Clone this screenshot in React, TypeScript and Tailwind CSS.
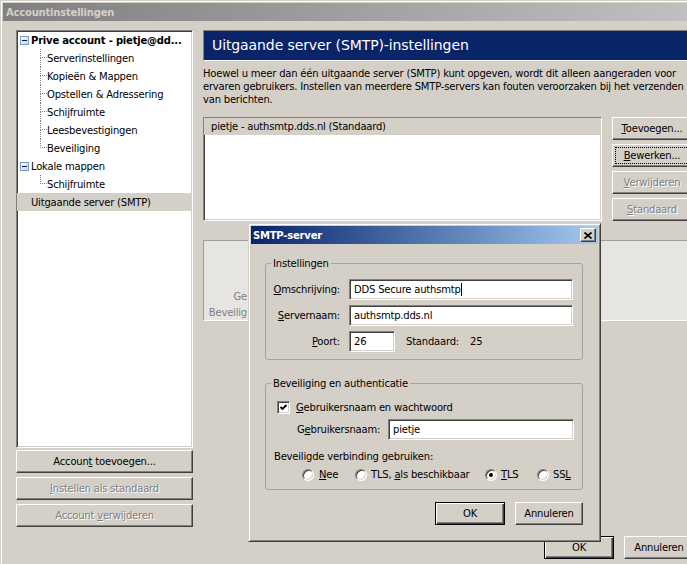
import type { ReactNode } from "react";

const bevel =
  "bg-[#d4d0c8] border border-t-white border-l-white border-r-[#404040] border-b-[#404040] shadow-[inset_-1px_-1px_0_#808080]";
const defaultBevel =
  "bg-[#d4d0c8] border border-black shadow-[inset_1px_1px_0_#fff,inset_-1px_-1px_0_#404040,inset_-2px_-2px_0_#808080]";
const sunken =
  "border border-t-[#808080] border-l-[#808080] border-r-white border-b-white shadow-[inset_1px_1px_0_#404040,inset_-1px_-1px_0_#d4d0c8]";
const disabledText = "text-[#808080] [text-shadow:1px_1px_0_#fff]";

const U = ({ children }: { children: ReactNode }) => (
  <span className="underline underline-offset-[1px]">{children}</span>
);

const Button = ({
  children,
  className = "",
  disabled = false,
  isDefault = false,
}: {
  children: ReactNode;
  className?: string;
  disabled?: boolean;
  isDefault?: boolean;
}) => (
  <div
    className={`flex h-[23px] items-center justify-center ${
      isDefault ? defaultBevel : bevel
    } ${disabled ? disabledText : ""} ${className}`}
  >
    <span>{children}</span>
  </div>
);

const MinusBox = () => (
  <svg width="9" height="9" viewBox="0 0 9 9" className="shrink-0">
    <defs>
      <linearGradient id="mb" x1="0" y1="0" x2="1" y2="1">
        <stop offset="0" stopColor="#ffffff" />
        <stop offset="1" stopColor="#c8d0dc" />
      </linearGradient>
    </defs>
    <rect x="0.5" y="0.5" width="8" height="8" fill="url(#mb)" stroke="#7f9db9" />
    <path d="M2 4.5h5" stroke="#00156e" />
  </svg>
);

const TreeChild = ({ label, last = false }: { label: string; last?: boolean }) => (
  <div className="flex h-[18px]">
    <div className="w-[23px]" />
    <div className="flex w-[7px] flex-col">
      <div className="h-[9px] border-b border-l border-dotted border-[#808080]" />
      <div className={last ? "h-[9px]" : "h-[9px] border-l border-dotted border-[#808080]"} />
    </div>
    <span className="flex items-center">{label}</span>
  </div>
);

const Radio = ({ checked = false }: { checked?: boolean }) => (
  <div
    className={`flex h-[12px] w-[12px] shrink-0 items-center justify-center rounded-full bg-white ${sunken}`}
  >
    {checked && <div className="h-[4px] w-[4px] rounded-full bg-black" />}
  </div>
);

const Field = ({ children, className = "" }: { children: ReactNode; className?: string }) => (
  <div className={`flex h-[21px] items-center bg-white pl-[4px] ${sunken} ${className}`}>
    {children}
  </div>
);

const SmtpDialog = () => (
  <div className="absolute left-[248px] top-[223px] flex h-[319px] w-[353px] flex-col border border-t-[#d4d0c8] border-l-[#d4d0c8] border-r-[#404040] border-b-[#404040] bg-[#d4d0c8] p-[2px] shadow-[inset_1px_1px_0_#fff,inset_-1px_-1px_0_#808080]">
    <div className="flex h-[18px] items-center justify-between bg-linear-to-r from-[#0a246a] to-[#a6caf0] pl-[2px]">
      <span className="font-bold text-white">SMTP-server</span>
      <div className={`mr-[2px] flex h-[14px] w-[16px] items-center justify-center ${bevel}`}>
        <svg width="8" height="7" viewBox="0 0 8 7">
          <path d="M0.5 0.5L7.5 6.5M7.5 0.5L0.5 6.5" stroke="#000" strokeWidth="1.7" />
        </svg>
      </div>
    </div>

    <div className="flex flex-col pl-[14px] pr-[15px]">
      <fieldset className="mt-[13px] rounded-[3px] border border-[#a5a39c] pb-[7px]">
        <legend className="ml-[5px] px-[2px]">Instellingen</legend>
        <div className="mt-[9px] flex flex-col gap-[5px]">
          <div className="flex items-center">
            <span className="w-[74px] text-right">
              <U>O</U>mschrijving:
            </span>
            <Field className="ml-[9px] w-[224px]">
              DDS Secure authsmtp<span className="h-[13px] w-px bg-black" />
            </Field>
          </div>
          <div className="flex items-center">
            <span className="w-[74px] text-right">
              <U>S</U>ervernaam:
            </span>
            <Field className="ml-[9px] w-[224px]">authsmtp.dds.nl</Field>
          </div>
          <div className="flex items-center">
            <span className="w-[74px] text-right">
              <U>P</U>oort:
            </span>
            <Field className="ml-[9px] w-[46px]">26</Field>
            <span className="ml-[11px] w-[64px]">Standaard:</span>
            <span>25</span>
          </div>
        </div>
      </fieldset>

      <fieldset className="mt-[17px] rounded-[3px] border border-[#a5a39c] pb-[8px]">
        <legend className="ml-[5px] px-[2px]">Beveiliging en authenticatie</legend>
        <div className="ml-[11px] mt-[11px] flex h-[13px] items-center gap-[6px]">
          <div className={`flex h-[13px] w-[13px] items-center justify-center bg-white ${sunken}`}>
            <svg width="9" height="9" viewBox="0 0 9 9">
              <path d="M1.5 4L3.5 6L7.5 2" stroke="#000" strokeWidth="1.8" fill="none" />
            </svg>
          </div>
          <span>
            <U>G</U>ebruikersnaam en wachtwoord
          </span>
        </div>
        <div className="ml-[31px] mt-[5px] flex items-center">
          <span className="w-[91px]">
            G<U>e</U>bruikersnaam:
          </span>
          <Field className="w-[186px]">pietje</Field>
        </div>
        <div className="ml-[8px] mt-[10px]">Beveiligde verbinding gebruiken:</div>
        <div className="ml-[36px] mt-[5px] flex h-[13px] items-center">
          <div className="flex w-[53px] items-center gap-[5px]">
            <Radio />
            <span>
              <U>N</U>ee
            </span>
          </div>
          <div className="flex w-[130px] items-center gap-[4px]">
            <Radio />
            <span>
              TLS, <U>a</U>ls beschikbaar
            </span>
          </div>
          <div className="flex w-[52px] items-center gap-[4px]">
            <Radio checked />
            <span>
              <U>T</U>LS
            </span>
          </div>
          <div className="flex items-center gap-[4px]">
            <Radio />
            <span>
              SS<U>L</U>
            </span>
          </div>
        </div>
      </fieldset>

      <div className="mt-[12px] flex justify-end gap-[10px]">
        <Button isDefault className="w-[70px]">
          OK
        </Button>
        <Button className="w-[68px]">Annuleren</Button>
      </div>
    </div>
  </div>
);

export default function App() {
  return (
    <div className="relative h-[564px] w-[687px] overflow-hidden bg-[#d4d0c8] font-['DejaVu_Sans',sans-serif] text-[10px] leading-[13px] tracking-[-0.2px] text-black">
      <div className="h-full border-l border-t border-[#d4d0c8]">
        <div className="h-full border-l border-t border-white pl-px pt-px">
          {/* title bar */}
          <div className="flex h-[18px] items-center bg-linear-to-r from-[#808080] to-[#c0c0c0] pl-[3px] font-bold text-[#d4d0c8]">
            Accountinstellingen
          </div>

          <div className="flex pt-[9px]">
            {/* left column */}
            <div className="ml-[13px] flex w-[178px] flex-col">
              <div className={`h-[418px] bg-white ${sunken}`}>
                <div className="flex h-[18px] items-center gap-[2px] pl-[3px]">
                  <MinusBox />
                  <span className="font-bold">Prive account - pietje@dd...</span>
                </div>
                <TreeChild label="Serverinstellingen" />
                <TreeChild label="Kopieën & Mappen" />
                <TreeChild label="Opstellen & Adressering" />
                <TreeChild label="Schijfruimte" />
                <TreeChild label="Leesbevestigingen" />
                <TreeChild label="Beveiliging" last />
                <div className="flex h-[18px] items-center gap-[2px] pl-[3px]">
                  <MinusBox />
                  <span>Lokale mappen</span>
                </div>
                <TreeChild label="Schijfruimte" last />
                <div className="flex h-[18px] items-center bg-[#d4d0c8] pl-[14px]">
                  Uitgaande server (SMTP)
                </div>
              </div>
              <Button className="mt-[2px] w-[177px]">
                Accoun<U>t</U> toevoegen...
              </Button>
              <Button disabled className="mt-[4px] w-[177px]">
                <U>I</U>nstellen als standaard
              </Button>
              <Button disabled className="mt-[4px] w-[177px]">
                Account <U>v</U>erwijderen
              </Button>
            </div>

            {/* right column */}
            <div className="ml-[10px] flex h-[529px] w-[491px] shrink-0 flex-col">
              <div className="flex h-[31px] items-center border border-t-[#808080] border-l-[#808080] border-r-white border-b-white bg-[#0a246a] pl-[8px] text-[14px] tracking-[-0.1px] text-white">
                Uitgaande server (SMTP)-instellingen
              </div>
              <div className="mt-[6px] whitespace-nowrap">
                <div>Hoewel u meer dan één uitgaande server (SMTP) kunt opgeven, wordt dit alleen aangeraden voor</div>
                <div>ervaren gebruikers. Instellen van meerdere SMTP-servers kan fouten veroorzaken bij het verzenden</div>
                <div>van berichten.</div>
              </div>

              <div className="mt-[11px] flex gap-[10px]">
                <div className={`h-[104px] w-[399px] bg-white ${sunken}`}>
                  <div className="flex h-[17px] items-center bg-[#d4d0c8] pl-[7px]">
                    pietje - authsmtp.dds.nl (Standaard)
                  </div>
                </div>
                <div className="flex w-[80px] flex-col gap-[4px]">
                  <Button>
                    <U>T</U>oevoegen...
                  </Button>
                  <div className={`flex h-[23px] items-stretch ${bevel}`}>
                    <div className="m-[2px] flex flex-1 items-center justify-center border border-dotted border-black">
                      <span>
                        <U>B</U>ewerken...
                      </span>
                    </div>
                  </div>
                  <Button disabled>
                    <U>V</U>erwijderen
                  </Button>
                  <Button disabled>
                    <U>S</U>tandaard
                  </Button>
                </div>
              </div>

              {/* panel mostly hidden behind the dialog */}
              <div className="mt-[19px] flex h-[81px] flex-col border border-t-[#a09e98] border-l-[#a09e98] border-r-white border-b-white bg-[#e7e5e1] pt-[49px] text-[#808080]">
                <div className="flex w-[43px] flex-col items-end gap-[3px] whitespace-nowrap">
                  <div>Ge</div>
                  <div>Beveilig</div>
                </div>
              </div>

              <div className="mt-auto flex justify-end gap-[10px]">
                <Button isDefault className="w-[70px]">
                  OK
                </Button>
                <Button className="w-[70px]">Annuleren</Button>
              </div>
            </div>
          </div>
        </div>
      </div>

      <SmtpDialog />
    </div>
  );
}
